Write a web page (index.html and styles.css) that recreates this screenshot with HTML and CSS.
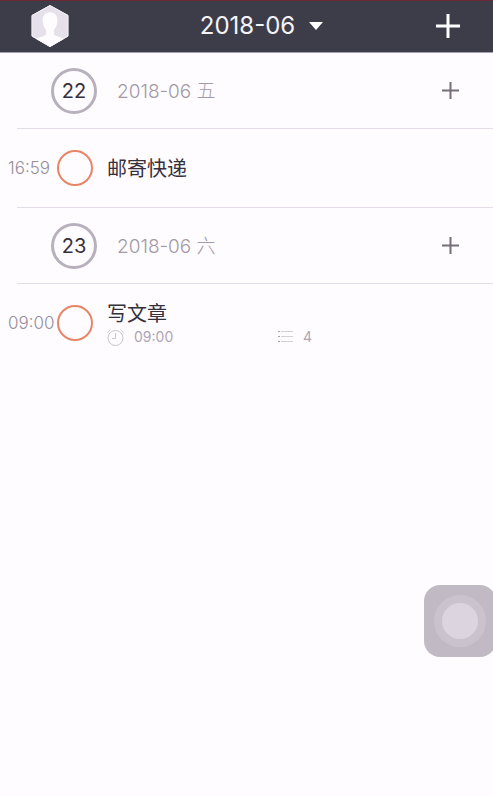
FILE: index.html
```
<!DOCTYPE html>
<html lang="zh-CN">

<head>
    <meta charset="UTF-8">
    <meta name="viewport" content="width=device-width, initial-scale=1.0">
    <title>2018-06</title>
    <link rel="stylesheet" href="styles.css">
</head>

<body>
    <header class="topbar">
        <button class="avatar" type="button" aria-label="头像">
            <svg width="38" height="42" viewBox="0 0 38 43">
                <defs>
                    <clipPath id="hexagon">
                        <path d="M19 0L38 10.5V32L19 43L0 32V10.5Z" />
                    </clipPath>
                </defs>
                <g clip-path="url(#hexagon)">
                    <rect width="38" height="43" fill="#e6e0ea" />
                    <path d="M19 7.500c-5 0-8 3.500-7.500 9c.3 4 1.600 7 3.500 9v4.500c-1 2.500-8 2.500-11 5.500V43h30v-7.500c-3-3-10-3-11-5.500v-4.500c1.900-2 3.200-5 3.500-9c.5-5.500-2.500-9-7.500-9Z" fill="#fefcff" />
                </g>
                <path d="M19 .6L37.500 10.800V31.700L19 42.400L.5 31.700V10.800Z" fill="none" stroke="#f6f2f8" />
            </svg>
        </button>
        <button class="month" type="button">
            2018-06
            <svg width="14" height="8" viewBox="0 0 14 8">
                <path d="M0 0H14L7 8Z" fill="#fff" />
            </svg>
        </button>
        <button class="add" type="button" aria-label="新建">
            <svg width="24" height="24" viewBox="0 0 24 24">
                <path d="M12 0V24M0 12H24" stroke="#fff" stroke-width="3" />
            </svg>
        </button>
    </header>

    <main class="timeline">
        <section>
            <div class="day">
                <span class="day-number">22</span>
                <h2 class="day-title">2018-06 五</h2>
                <button class="day-add" type="button" aria-label="添加到22日">
                    <svg width="17" height="17" viewBox="0 0 17 17">
                        <path d="M8.500 0V17M0 8.500H17" stroke="#756d7a" stroke-width="2" />
                    </svg>
                </button>
            </div>
            <div class="task divided">
                <time class="task-time">16:59</time>
                <input class="task-check" type="checkbox" id="task-1">
                <label class="task-title" for="task-1">邮寄快递</label>
            </div>
        </section>

        <section>
            <div class="day">
                <span class="day-number">23</span>
                <h2 class="day-title">2018-06 六</h2>
                <button class="day-add" type="button" aria-label="添加到23日">
                    <svg width="17" height="17" viewBox="0 0 17 17">
                        <path d="M8.500 0V17M0 8.500H17" stroke="#756d7a" stroke-width="2" />
                    </svg>
                </button>
            </div>
            <div class="task">
                <time class="task-time">09:00</time>
                <input class="task-check" type="checkbox" id="task-2">
                <div class="task-body">
                    <label class="task-title" for="task-2">写文章</label>
                    <div class="task-meta">
                        <span class="meta-item">
                            <svg width="17" height="17" viewBox="0 0 17 17" fill="none" stroke="#cbc3ce">
                                <circle cx="8.500" cy="9" r="7.500" />
                                <path d="M8.500 4V9.500H5M.5 3.500L3.500 .7M13.500 .7L16.500 3.500" />
                            </svg>
                            09:00
                        </span>
                        <span class="meta-item">
                            <svg width="16" height="16" viewBox="0 0 16 16">
                                <path d="M4 2.500H16M4 7.500H16M4 12.500H16" stroke="#d6ced9" />
                                <path d="M1 2.500H3M1 7.500H3M1 12.500H3" stroke="#a79fab" />
                            </svg>
                            4
                        </span>
                    </div>
                </div>
            </div>
        </section>
    </main>

    <button class="touch" type="button" aria-label="辅助触控">
        <span class="touch-ring"></span>
    </button>
</body>

</html>
```

FILE: styles.css
```
* {
    box-sizing: border-box;
}

body {
    margin: 0;
    min-height: 100vh;
    background: #fefcff;
    color: #35303b;
    font-family: Inter, "Noto Sans CJK SC", sans-serif;
}

button {
    display: flex;
    align-items: center;
    padding: 0;
    border: 0;
    background: none;
    color: inherit;
    font: inherit;
    cursor: pointer;
}

svg {
    display: block;
    flex: none;
}

.topbar {
    display: grid;
    grid-template-columns: 1fr auto 1fr;
    align-items: center;
    height: 53px;
    padding: 0 33px 1px 31px;
    background: #3c3d49;
    border-top: 1px solid #6b2733;
    border-bottom: 1px solid #a79fae;
    color: #f6f3f8;
}

.month {
    gap: 14px;
    margin-left: 32px;
    font-size: 24px;
    font-weight: 400;
    line-height: 32px;
}

.add {
    justify-self: end;
}

.day {
    display: flex;
    align-items: center;
    height: 76px;
    margin-left: 17px;
    padding: 0 34px;
    border-bottom: 1px solid #e3dce6;
}

.day-number {
    display: flex;
    align-items: center;
    justify-content: center;
    width: 46px;
    height: 46px;
    border: 3px solid #b8b0bc;
    border-radius: 50%;
    font-size: 20px;
}

.day-title {
    flex: 1;
    margin: 0 0 0 20px;
    padding-top: 2px;
    color: #a29aa6;
    font-size: 19px;
    font-weight: 300;
    line-height: 24px;
}

.task {
    display: grid;
    grid-template-columns: 41px 36px 1fr;
    align-items: center;
    gap: 0 8px;
    min-height: 78px;
    padding-left: 8px;
}

.divided {
    grid-template-rows: 78px 1px;
}

.divided::after {
    content: "";
    grid-column: 1 / -1;
    height: 1px;
    margin-left: 9px;
    background: #e3dce6;
}

.task-time {
    color: #958d99;
    font-size: 17px;
    font-weight: 300;
    line-height: 24px;
    white-space: nowrap;
}

.task-check {
    appearance: none;
    width: 36px;
    height: 36px;
    margin: 0;
    border: 2px solid #e98567;
    border-radius: 50%;
}

.task-title {
    display: block;
    margin-left: 6px;
    padding-top: 2px;
    font-size: 20px;
    line-height: 26px;
}

.task-meta {
    display: grid;
    grid-template-columns: 170px auto;
    justify-content: start;
    margin-left: 6px;
}

.meta-item {
    display: flex;
    align-items: center;
    gap: 10px;
    color: #aea6b2;
    font-size: 14px;
    line-height: 20px;
}

/* floating button, runs slightly past the right edge */
.touch {
    position: fixed;
    right: -3px;
    bottom: 139px;
    justify-content: center;
    width: 72px;
    height: 72px;
    border-radius: 16px;
    background: #c1b9c3;
}

.touch-ring {
    width: 52px;
    height: 52px;
    border: 8px solid #cac3ce;
    border-radius: 50%;
    background: #dcd5e0;
}
```
